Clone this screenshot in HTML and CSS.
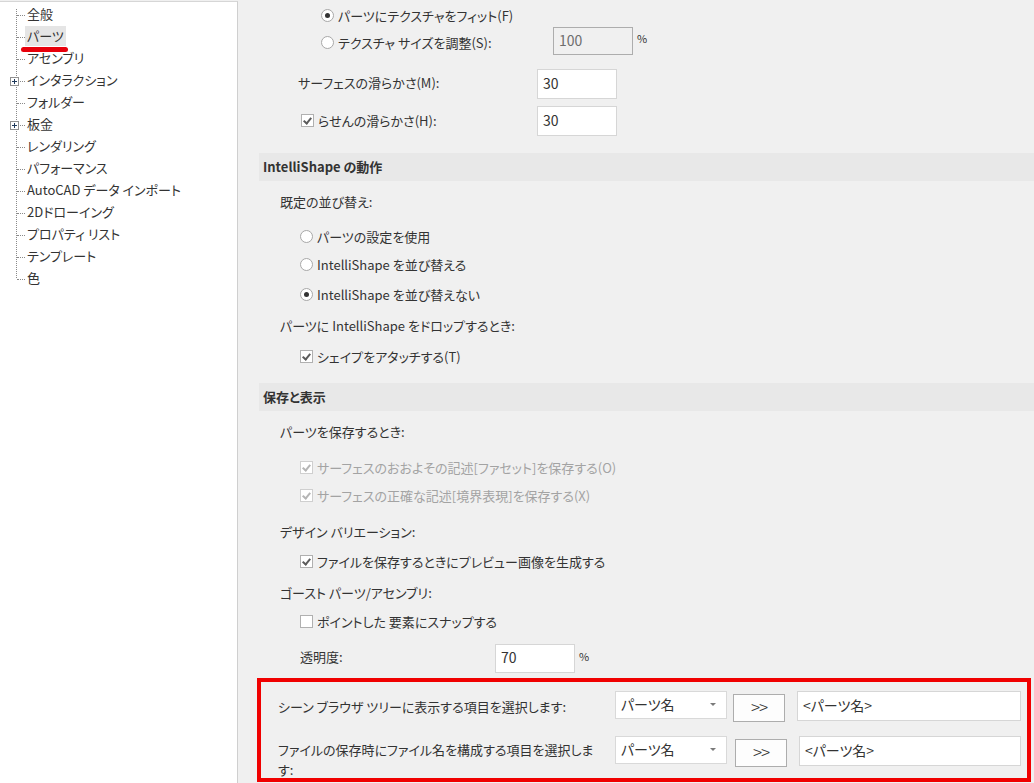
FILE: index.html
```html
<!DOCTYPE html>
<html lang="ja">
<head>
    <meta charset="UTF-8">
    <title>オプション - パーツ</title>
    <link rel="stylesheet" href="styles.css">
</head>
<body>
    <div class="window">
        <div class="tree-pane">
            <ul class="tree">
                <li>全般</li>
                <li class="selected"><span class="node">パーツ</span></li>
                <li>アセンブリ</li>
                <li class="expandable"><span class="expander"></span>インタラクション</li>
                <li>フォルダー</li>
                <li class="expandable"><span class="expander"></span>板金</li>
                <li>レンダリング</li>
                <li>パフォーマンス</li>
                <li>AutoCAD データ インポート</li>
                <li>2Dドローイング</li>
                <li>プロパティ リスト</li>
                <li>テンプレート</li>
                <li class="last">色</li>
            </ul>
        </div>

        <div class="options">
            <div class="row row-fit in-3">
                <span class="radio checked"></span>パーツにテクスチャをフィット(F)
            </div>
            <div class="row tall in-3">
                <span class="field-label w-texture"><span class="radio"></span>テクスチャ サイズを調整(S):</span>
                <span class="textbox disabled w-80">100</span>
                <span class="unit">%</span>
            </div>
            <div class="row field mt-14 in-2b">
                <span class="field-label w-smooth">サーフェスの滑らかさ(M):</span>
                <span class="textbox w-80">30</span>
            </div>
            <div class="row field mt-7 in-2c">
                <span class="field-label w-helix"><span class="check checked"></span>らせんの滑らかさ(H):</span>
                <span class="textbox w-80">30</span>
            </div>

            <div class="section-head mt-17">IntelliShape の動作</div>
            <div class="row text in-1 mt-11">既定の並び替え:</div>
            <div class="row text in-2 mt-13"><span class="radio"></span>パーツの設定を使用</div>
            <div class="row text in-2 mt-6"><span class="radio"></span>IntelliShape を並び替える</div>
            <div class="row text in-2 mt-8"><span class="radio checked"></span>IntelliShape を並び替えない</div>
            <div class="row text in-1 mt-9">パーツに IntelliShape をドロップするとき:</div>
            <div class="row text in-2 mt-9"><span class="check checked"></span>シェイプをアタッチする(T)</div>

            <div class="section-head mt-14">保存と表示</div>
            <div class="row text in-1 mt-11">パーツを保存するとき:</div>
            <div class="row text in-2 mt-14 muted"><span class="check checked disabled"></span>サーフェスのおおよその記述[ファセット]を保存する(O)</div>
            <div class="row text in-2 mt-6 muted"><span class="check checked disabled"></span>サーフェスの正確な記述[境界表現]を保存する(X)</div>
            <div class="row text in-1 mt-14">デザイン バリエーション:</div>
            <div class="row text in-2 mt-8"><span class="check checked"></span>ファイルを保存するときにプレビュー画像を生成する</div>
            <div class="row text in-1 mt-9">ゴースト パーツ/アセンブリ:</div>
            <div class="row text in-2 mt-7"><span class="check"></span>ポイントした 要素にスナップする</div>
            <div class="row opacity in-2 mt-10">
                <span class="field-label w-opacity">透明度:</span>
                <span class="textbox w-80">70</span>
                <span class="unit">%</span>
            </div>

            <div class="highlight">
                <div class="name-row">
                    <span class="name-label">シーン ブラウザ ツリーに表示する項目を選択します:</span>
                    <span class="select">パーツ名</span>
                    <span class="add-btn">&gt;&gt;</span>
                    <span class="textbox name-box">&lt;パーツ名&gt;</span>
                </div>
                <div class="name-row second">
                    <span class="name-label">ファイルの保存時にファイル名を構成する項目を選択します:</span>
                    <span class="select">パーツ名</span>
                    <span class="add-btn">&gt;&gt;</span>
                    <span class="textbox name-box">&lt;パーツ名&gt;</span>
                </div>
            </div>
        </div>
    </div>
</body>
</html>
```

FILE: styles.css
```css
html, body {
    margin: 0;
    height: 100%;
    overflow: hidden;
}
body {
    font-family: "Noto Sans CJK JP", "Noto Sans", sans-serif;
    font-size: 13px;
    font-feature-settings: "palt";
    color: #333;
    background: #f0f0f0;
}
.window {
    display: flex;
    height: 783px;
}

/* left tree */
.tree-pane {
    width: 237px;
    flex: 0 0 237px;
    background: #fff;
    border-right: 1px solid #cfcfcf;
    border-top: 1px solid #d6d6d6;
    margin-top: 1px;
}
.tree {
    list-style: none;
    margin: 2px 0 0 0;
    padding: 0;
    position: relative;
}
.tree::before {
    content: "";
    position: absolute;
    left: 16px;
    top: 5px;
    height: 269px;
    border-left: 1px dotted #8a8a8a;
}
.tree li {
    position: relative;
    height: 22px;
    line-height: 20px;
    padding-left: 27px;
    white-space: nowrap;
}
.tree li::before {
    content: "";
    position: absolute;
    left: 17px;
    top: 11px;
    width: 8px;
    border-top: 1px dotted #8a8a8a;
}
.tree .expander {
    position: absolute;
    left: 10px;
    top: 7px;
    width: 9px;
    height: 9px;
    box-sizing: border-box;
    border: 1px solid #919191;
    background: #fff;
    z-index: 1;
}
.tree .expander::before,
.tree .expander::after {
    content: "";
    position: absolute;
    background: #1e395b;
}
.tree .expander::before {
    left: 1px;
    top: 3px;
    width: 5px;
    height: 1px;
}
.tree .expander::after {
    left: 3px;
    top: 1px;
    width: 1px;
    height: 5px;
}
.tree .selected .node {
    position: relative;
    display: inline-block;
    background: #e5e5e5;
    line-height: 20px;
    height: 20px;
    margin-top: 0;
    margin-left: -2px;
    padding: 0 2px;
    vertical-align: top;
}
.tree .selected .node::after {
    content: "";
    position: absolute;
    left: -4px;
    right: -2px;
    top: 21px;
    height: 5px;
    border-radius: 3px;
    background: #e8000b;
}

/* right options */
.options {
    flex: 1;
    min-width: 0;
}
.row {
    display: flex;
    align-items: center;
    box-sizing: border-box;
    height: 22px;
    white-space: nowrap;
}
.row.text {
    padding-bottom: 3px;
}
.row.tall { height: 28px; }
.row.row-fit { height: 27px; padding-top: 3px; }
.row.field { height: 30px; }
.row.opacity { height: 29px; }
.in-1 { padding-left: 42px; }
.in-2 { padding-left: 62px; }
.in-2b { padding-left: 60px; }
.in-2c { padding-left: 63px; }
.in-3 { padding-left: 83px; }

.mt-6 { margin-top: 6px; }
.mt-7 { margin-top: 7px; }
.mt-8 { margin-top: 8px; }
.mt-9 { margin-top: 9px; }
.mt-10 { margin-top: 10px; }
.mt-11 { margin-top: 11px; }
.mt-13 { margin-top: 13px; }
.mt-14 { margin-top: 14px; }
.mt-17 { margin-top: 17px; }

.field-label {
    display: flex;
    align-items: center;
    padding-bottom: 4px;
}
.w-texture { width: 232px; padding-bottom: 0; padding-top: 2px; }
.w-smooth { width: 239px; }
.w-helix { width: 236px; padding-bottom: 2px; }
.w-opacity { width: 195px; }

.section-head {
    height: 28px;
    line-height: 27px;
    margin-left: 21px;
    padding-left: 4px;
    background: #e8e8e8;
    font-weight: bold;
    color: #333;
}
.muted { color: #a3a3a3; }

.radio {
    width: 13px;
    height: 13px;
    box-sizing: border-box;
    border: 1px solid #a8a8a8;
    border-radius: 50%;
    background: #fff;
    margin-right: 4px;
    flex: 0 0 auto;
    position: relative;
}
.radio.checked::after {
    content: "";
    position: absolute;
    left: 3px;
    top: 3px;
    width: 5px;
    height: 5px;
    border-radius: 50%;
    background: #333;
}
.check {
    width: 13px;
    height: 13px;
    box-sizing: border-box;
    border: 1px solid #b0b0b0;
    background: #fff;
    margin-right: 4px;
    flex: 0 0 auto;
    position: relative;
}
.check.checked::after {
    content: "";
    position: absolute;
    left: 3px;
    top: 1px;
    width: 3px;
    height: 6px;
    border-right: 2px solid #5c5c5c;
    border-bottom: 2px solid #5c5c5c;
    transform: rotate(40deg);
}
.check.disabled {
    border-color: #cfcfcf;
}
.check.disabled::after {
    border-color: #b5b5b5;
}

.textbox {
    display: flex;
    align-items: center;
    box-sizing: border-box;
    height: 30px;
    padding: 0 0 3px 5px;
    background: #fff;
    border: 1px solid #d6d6d6;
    font-size: 14px;
    color: #333;
}
.opacity .textbox { height: 29px; }
.textbox.disabled {
    height: 28px;
    border-color: #adadad;
    background: #f0f0f0;
    color: #6d6d6d;
}
.w-80 { width: 80px; }
.unit {
    margin-left: 4px;
    padding-bottom: 6px;
    font-size: 11px;
}

/* highlighted naming block */
.highlight {
    margin: 5px 3px 0 19px;
    height: 104px;
    box-sizing: border-box;
    border: 4px solid #f00000;
    padding: 9px 0 0 17px;
}
.name-row {
    display: flex;
    align-items: flex-start;
    height: 31px;
}
.name-row.second { margin-top: 14px; }
.name-label {
    box-sizing: border-box;
    width: 337px;
    flex: 0 0 337px;
    padding-right: 14px;
    margin-top: 6px;
    line-height: 20px;
    white-space: normal;
}
.second .name-label { margin-top: 4px; }
.select {
    position: relative;
    display: flex;
    align-items: center;
    box-sizing: border-box;
    width: 112px;
    height: 28px;
    padding: 0 0 2px 5px;
    background: #fff;
    border: 1px solid #d9d9d9;
    font-size: 14px;
}
.select::after {
    content: "";
    position: absolute;
    right: 10px;
    top: 11px;
    border-left: 3px solid transparent;
    border-right: 3px solid transparent;
    border-top: 3px solid #7a7a7a;
}
.add-btn {
    display: flex;
    align-items: center;
    justify-content: center;
    box-sizing: border-box;
    width: 52px;
    height: 28px;
    margin: 3px 0 0 6px;
    padding-bottom: 3px;
    background: #fdfdfd;
    border: 1px solid #adadad;
    font-size: 17px;
    font-weight: 300;
    letter-spacing: -1px;
}
.second .add-btn { margin-left: 8px; }
.name-box {
    width: 224px;
    margin-left: 12px;
}
.second .name-box {
    width: 222px;
}
```
